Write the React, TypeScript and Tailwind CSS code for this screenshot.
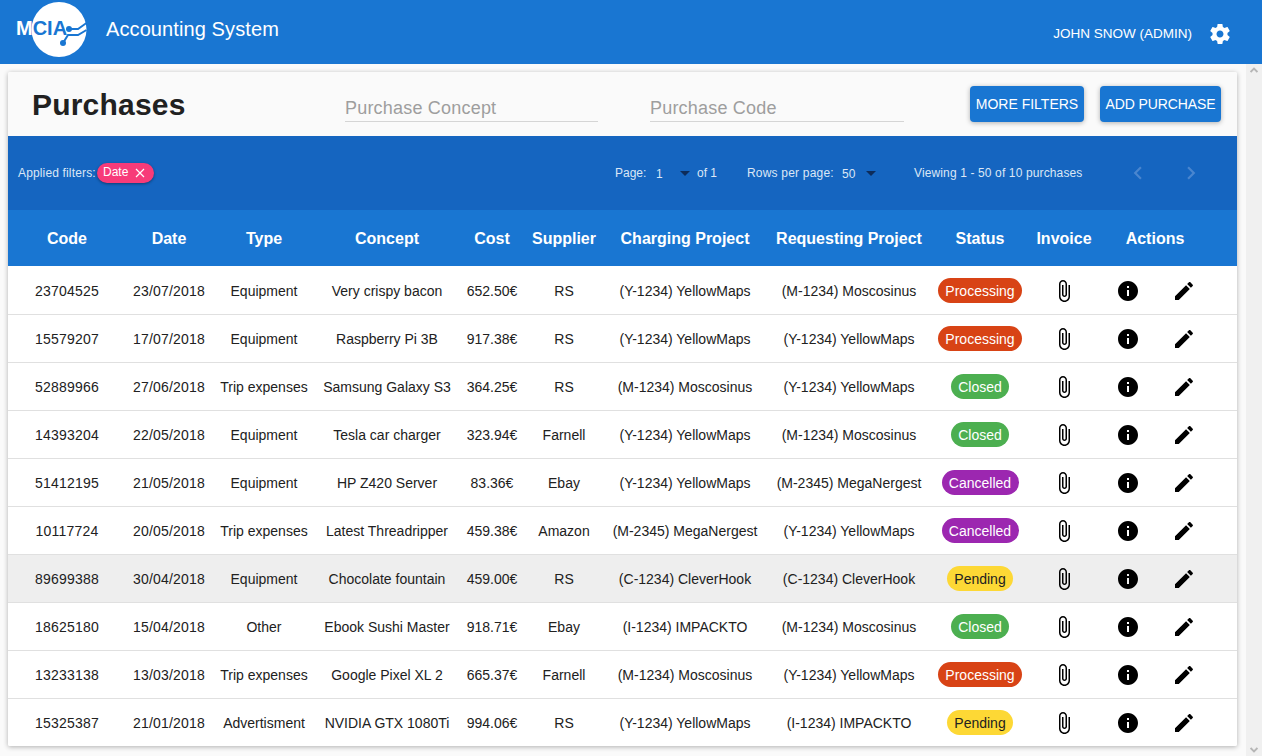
import React from "react";

const gridCols =
  "grid grid-cols-[118px_86px_104px_142px_68px_76px_166px_162px_100px_68px_60px_52px_27px]";

const statusStyles: Record<string, string> = {
  Processing: "bg-[#d84315] text-white w-[84px]",
  Closed: "bg-[#4caf50] text-white w-[58px]",
  Cancelled: "bg-[#9c27b0] text-white w-[77px]",
  Pending: "bg-[#fdd835] text-[#212121] w-[66px]",
};

const rows = [
  ["23704525", "23/07/2018", "Equipment", "Very crispy bacon", "652.50€", "RS", "(Y-1234) YellowMaps", "(M-1234) Moscosinus", "Processing"],
  ["15579207", "17/07/2018", "Equipment", "Raspberry Pi 3B", "917.38€", "RS", "(Y-1234) YellowMaps", "(Y-1234) YellowMaps", "Processing"],
  ["52889966", "27/06/2018", "Trip expenses", "Samsung Galaxy S3", "364.25€", "RS", "(M-1234) Moscosinus", "(Y-1234) YellowMaps", "Closed"],
  ["14393204", "22/05/2018", "Equipment", "Tesla car charger", "323.94€", "Farnell", "(Y-1234) YellowMaps", "(M-1234) Moscosinus", "Closed"],
  ["51412195", "21/05/2018", "Equipment", "HP Z420 Server", "83.36€", "Ebay", "(Y-1234) YellowMaps", "(M-2345) MegaNergest", "Cancelled"],
  ["10117724", "20/05/2018", "Trip expenses", "Latest Threadripper", "459.38€", "Amazon", "(M-2345) MegaNergest", "(Y-1234) YellowMaps", "Cancelled"],
  ["89699388", "30/04/2018", "Equipment", "Chocolate fountain", "459.00€", "RS", "(C-1234) CleverHook", "(C-1234) CleverHook", "Pending"],
  ["18625180", "15/04/2018", "Other", "Ebook Sushi Master", "918.71€", "Ebay", "(I-1234) IMPACKTO", "(M-1234) Moscosinus", "Closed"],
  ["13233138", "13/03/2018", "Trip expenses", "Google Pixel XL 2", "665.37€", "Farnell", "(M-1234) Moscosinus", "(Y-1234) YellowMaps", "Processing"],
  ["15325387", "21/01/2018", "Advertisment", "NVIDIA GTX 1080Ti", "994.06€", "RS", "(Y-1234) YellowMaps", "(I-1234) IMPACKTO", "Pending"],
];

const headers = ["Code", "Date", "Type", "Concept", "Cost", "Supplier", "Charging Project", "Requesting Project", "Status", "Invoice"];

const Icon = ({ d, className }: { d: string; className?: string }) => (
  <svg viewBox="0 0 24 24" width="24" height="24" fill="currentColor" className={className}>
    <path d={d} />
  </svg>
);

const ATTACH =
  "M16.5 6v11.5c0 2.21-1.79 4-4 4s-4-1.79-4-4V5c0-1.38 1.12-2.5 2.5-2.5s2.5 1.12 2.5 2.5v10.5c0 .55-.45 1-1 1s-1-.45-1-1V6H10v9.5c0 1.38 1.12 2.5 2.5 2.5s2.5-1.12 2.5-2.5V5c0-2.21-1.79-4-4-4S7 2.79 7 5v12.5c0 3.04 2.46 5.5 5.5 5.5s5.5-2.46 5.5-5.5V6h-1.5z";
const INFO =
  "M12 2C6.48 2 2 6.48 2 12s4.48 10 10 10 10-4.48 10-10S17.52 2 12 2zm1 15h-2v-6h2v6zm0-8h-2V7h2v2z";
const EDIT =
  "M3 17.25V21h3.75L17.81 9.94l-3.75-3.75L3 17.25zM20.71 7.04c.39-.39.39-1.02 0-1.41l-2.34-2.34c-.39-.39-1.02-.39-1.41 0l-1.83 1.83 3.75 3.75 1.83-1.83z";
const SETTINGS =
  "M19.43 12.98c.04-.32.07-.64.07-.98s-.03-.66-.07-.98l2.11-1.65c.19-.15.24-.42.12-.64l-2-3.46c-.12-.22-.39-.3-.61-.22l-2.49 1c-.52-.4-1.08-.73-1.69-.98l-.38-2.65C14.46 2.18 14.25 2 14 2h-4c-.25 0-.46.18-.49.42l-.38 2.65c-.61.25-1.17.59-1.69.98l-2.49-1c-.23-.09-.49 0-.61.22l-2 3.46c-.13.22-.07.49.12.64l2.11 1.65c-.04.32-.07.65-.07.98s.03.66.07.98l-2.11 1.65c-.19.15-.24.42-.12.64l2 3.46c.12.22.39.3.61.22l2.49-1c.52.4 1.08.73 1.69.98l.38 2.65c.03.24.24.42.49.42h4c.25 0 .46-.18.49-.42l.38-2.65c.61-.25 1.17-.59 1.69-.98l2.49 1c.23.09.49 0 .61-.22l2-3.46c.12-.22.07-.49-.12-.64l-2.11-1.65zM12 15.5c-1.93 0-3.5-1.57-3.5-3.5s1.57-3.5 3.5-3.5 3.5 1.57 3.5 3.5-1.57 3.5-3.5 3.5z";

const Logo = () => (
  <div className="relative w-[72px] h-[60px] ml-[15px] shrink-0">
    <svg viewBox="0 0 72 60" width="72" height="60" className="absolute left-0 top-0">
      <circle cx="44" cy="29.5" r="27.5" fill="#fff" />
      <g stroke="#1976d2" strokeWidth="2" fill="none">
        <path d="M54 29 H63 L71.5 23" />
        <path d="M48 43 L53 35 H63 L71.5 30" />
      </g>
      <circle cx="54" cy="29" r="3" fill="#1976d2" />
      <circle cx="48" cy="43" r="3" fill="#1976d2" />
    </svg>
    <span className="absolute left-px top-[17px] text-[20px] leading-[23px] font-bold">
      <span className="text-white">M</span>
      <span className="text-[#1976d2]">CIA</span>
    </span>
  </div>
);

const Dropdown = ({ value, w }: { value: string; w: string }) => (
  <span className={`flex items-center justify-between ${w}`}>
    <span className="mt-px">{value}</span>
    <span className="w-0 h-0 border-x-[5px] border-x-transparent border-t-[5px] border-t-[#0d2c5a]" />
  </span>
);

const App = () => {
  return (
    <div className="w-[1262px] h-[756px] overflow-hidden flex flex-col bg-[#fafafa] font-['Liberation_Sans',Arial,sans-serif] text-[14px]">
      <header className="h-16 shrink-0 bg-[#1976d2] flex items-start text-white">
        <Logo />
        <div className="ml-[19px] mt-[15px] text-[20px] leading-7 tracking-[0.1px]">Accounting System</div>
        <div className="ml-auto mt-[22px] flex items-center pr-[30px]">
          <span className="text-[13.5px] leading-6 mr-[16px]">JOHN SNOW (ADMIN)</span>
          <Icon d={SETTINGS} />
        </div>
      </header>

      <div className="flex flex-1 min-h-0">
        <main className="w-[1246px] pl-2 pt-2">
          <div className="w-[1229px] h-[674px] flex flex-col rounded-[2px] shadow-[0_1px_5px_rgba(0,0,0,0.3)] bg-white overflow-hidden">
            <div className="h-16 shrink-0 bg-[#fafafa] flex items-start pl-6 pr-4">
              <h1 className="w-[313px] mt-[14px] text-[30px] leading-[38px] font-bold tracking-[0.2px] text-[#212121]">Purchases</h1>
              <div className="w-[253px] h-[30px] mt-[20px] border-b border-[#d5d5d5] text-[18px] leading-[33px] tracking-[0.2px] text-[#9e9e9e]">
                Purchase Concept
              </div>
              <div className="w-[254px] h-[30px] mt-[20px] ml-[52px] border-b border-[#d5d5d5] text-[18px] leading-[33px] tracking-[0.2px] text-[#9e9e9e]">
                Purchase Code
              </div>
              <button className="ml-[66px] mt-[14px] h-9 w-[114px] rounded bg-[#1976d2] text-white text-[14px] shadow-[0_1px_5px_rgba(0,0,0,0.3)]">
                MORE FILTERS
              </button>
              <button className="ml-4 mt-[14px] h-9 w-[121px] rounded bg-[#1976d2] text-white text-[14px] tracking-[-0.1px] shadow-[0_1px_5px_rgba(0,0,0,0.3)]">
                ADD PURCHASE
              </button>
            </div>

            <div className="h-[74px] shrink-0 bg-[#1565c0] flex items-start pt-[27px] pl-[10px] text-[12px] leading-[20px] text-[#dbe7f6]">
              <span className="w-[79px] whitespace-nowrap tracking-[0.15px]">Applied filters:</span>
              <span className="h-5 w-[57px] rounded-full bg-[#f73b79] text-white flex items-center pl-[6px] shadow-[0_1px_3px_rgba(0,0,0,0.4)]">
                <span className="leading-[16px] mb-[2px]">Date</span>
                <svg viewBox="0 0 12 12" width="12" height="12" className="ml-[6px]" stroke="#fff" strokeWidth="1.2">
                  <path d="M2 2l8 8M10 2l-8 8" />
                </svg>
              </span>
              <span className="ml-[461px] w-[41px]">Page:</span>
              <span>
                <Dropdown value="1" w="w-[34px]" />
              </span>
              <span className="ml-[7px] w-[50px]">of 1</span>
              <span className="w-[95px] tracking-[0.2px]">Rows per page:</span>
              <span>
                <Dropdown value="50" w="w-[34px]" />
              </span>
              <span className="ml-[38px] w-[168px] whitespace-nowrap tracking-[0.13px]">Viewing 1 - 50 of 10 purchases</span>
              <svg viewBox="0 0 24 24" width="26" height="26" className="ml-[43px] -mt-[3px]" fill="#4a86cf">
                <path d="M15.41 7.41L14 6l-6 6 6 6 1.41-1.41L10.83 12z" />
              </svg>
              <svg viewBox="0 0 24 24" width="26" height="26" className="ml-[27px] -mt-[3px]" fill="#4a86cf">
                <path d="M10 6L8.59 7.41 13.17 12l-4.58 4.59L10 18l6-6z" />
              </svg>
            </div>

            <div className={`${gridCols} h-14 shrink-0 pt-px bg-[#1976d2] text-white text-[16px] font-bold items-center text-center`}>
              {headers.map((h) => (
                <div key={h} className="whitespace-nowrap">
                  {h}
                </div>
              ))}
              <div className="col-span-2 pl-[2px]">Actions</div>
            </div>

            {rows.map((r, i) => (
              <div
                key={r[0]}
                className={`${gridCols} h-12 shrink-0 items-center text-center text-[14px] text-[#212121] border-t ${
                  i === 6 ? "bg-[#eeeeee]" : "bg-white"
                } ${i === 0 ? "border-white" : "border-[#e0e0e0]"}`}
              >
                {r.slice(0, 8).map((c, j) => (
                  <div key={j} className={`whitespace-nowrap pt-[2px] ${j < 2 ? "tracking-[0.2px]" : ""}`}>
                    {c}
                  </div>
                ))}
                <div className="flex justify-center">
                  <span className={`h-[25px] pt-[2px] rounded-full flex items-center justify-center ${statusStyles[r[8]]}`}>{r[8]}</span>
                </div>
                <div className="flex justify-center">
                  <Icon d={ATTACH} className="text-black" />
                </div>
                <div className="flex justify-center">
                  <Icon d={INFO} className="text-black" />
                </div>
                <div className="flex justify-center">
                  <Icon d={EDIT} className="text-black" />
                </div>
              </div>
            ))}
          </div>
        </main>
        <aside className="w-4 shrink-0 bg-[#f0f0f0] flex flex-col justify-between items-center py-[3px]">
          <svg viewBox="0 0 8 6" width="8" height="6" fill="none" stroke="#b5b5b5" strokeWidth="1.8">
            <path d="M0.6 5L4 1.6 7.4 5" />
          </svg>
          <svg viewBox="0 0 8 6" width="8" height="6" fill="none" stroke="#b5b5b5" strokeWidth="1.8">
            <path d="M0.6 1L4 4.4 7.4 1" />
          </svg>
        </aside>
      </div>
    </div>
  );
};

export default App;
